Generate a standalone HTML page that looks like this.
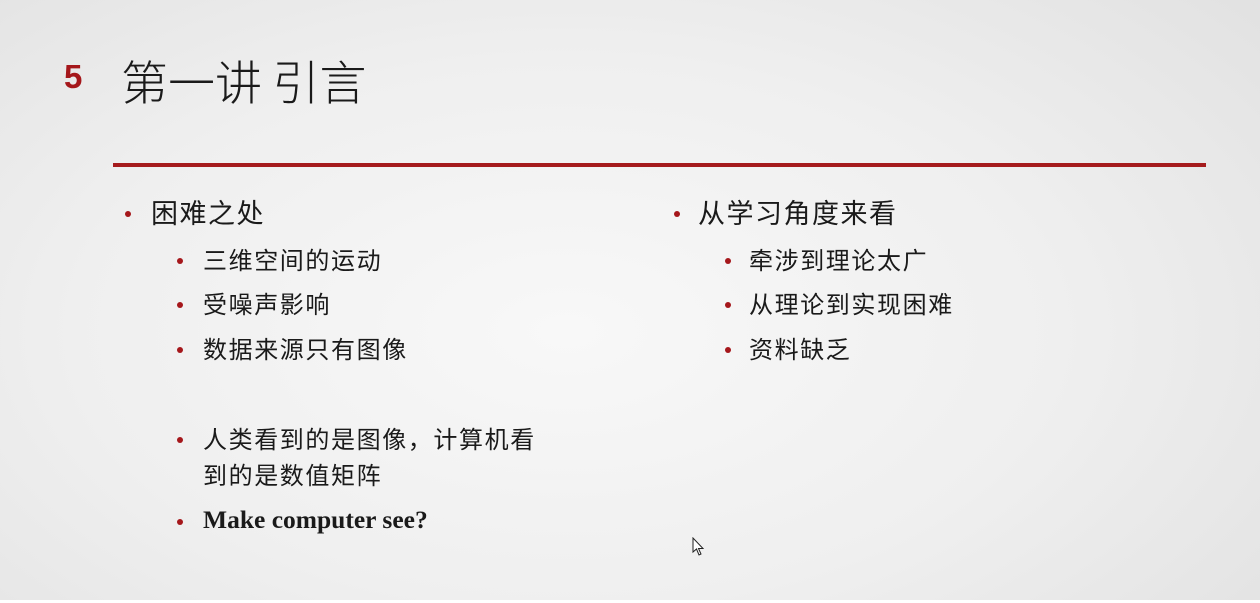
<!DOCTYPE html>
<html><head><meta charset="utf-8"><style>
body{margin:0;width:1260px;height:603px;overflow:hidden;position:relative;
background:radial-gradient(ellipse 900px 500px at 45% 55%,#f8f8f8 0%,#efefef 55%,#e2e2e2 100%);
font-family:"Liberation Serif","Noto Sans CJK SC",serif;color:#1a1a1a}
.t{position:absolute;white-space:nowrap}
.n{left:64px;top:58px;font:bold 33px "Liberation Sans",sans-serif;color:#a5171b}
.h{left:121px;top:45px;font:300 47px "Noto Sans CJK SC",sans-serif;color:#1a1a1a}
.line{position:absolute;left:113px;top:163px;width:1093px;height:4px;background:#a51b1d}
.l1{font-size:27px;letter-spacing:1.5px;font-family:"Noto Sans CJK SC",sans-serif}
.l2{font-size:24px;letter-spacing:1.6px;font-family:"Noto Sans CJK SC",sans-serif}
.b{position:absolute;width:6px;height:6px;border-radius:50%;background:#a5171b}
.bot{position:absolute;left:0;top:600px;width:1260px;height:3px;background:#fff}
</style></head><body>
<div class="t n">5</div>
<div class="t h">第一讲 引言</div>
<div class="line"></div>

<div class="b" style="left:125px;top:211px"></div><div class="t l1" style="left:151px;top:192px">困难之处</div>
<div class="b" style="left:177px;top:258px"></div><div class="t l2" style="left:203px;top:241px">三维空间的运动</div>
<div class="b" style="left:177px;top:302px"></div><div class="t l2" style="left:203px;top:285px">受噪声影响</div>
<div class="b" style="left:177px;top:347px"></div><div class="t l2" style="left:203px;top:330px">数据来源只有图像</div>
<div class="b" style="left:177px;top:437px"></div><div class="t l2" style="left:203px;top:420px">人类看到的是图像，计算机看</div>
<div class="t l2" style="left:203px;top:456px">到的是数值矩阵</div>
<div class="b" style="left:177px;top:519px"></div><div class="t" style="left:203px;top:505px;font-size:25.5px;font-weight:bold">Make computer see?</div>

<div class="b" style="left:674px;top:211px"></div><div class="t l1" style="left:698px;top:192px">从学习角度来看</div>
<div class="b" style="left:725px;top:258px"></div><div class="t l2" style="left:749px;top:241px">牵涉到理论太广</div>
<div class="b" style="left:725px;top:302px"></div><div class="t l2" style="left:749px;top:285px">从理论到实现困难</div>
<div class="b" style="left:725px;top:347px"></div><div class="t l2" style="left:749px;top:330px">资料缺乏</div>
<div class="bot"></div>

<svg style="position:absolute;left:692px;top:537px" width="14" height="20" viewBox="0 0 14 20"><path d="M1 1 L1 15 L4.5 12 L7 18 L9 17 L6.5 11.5 L11 11.5 Z" fill="#fff" stroke="#222" stroke-width="1"/></svg>
</body></html>
